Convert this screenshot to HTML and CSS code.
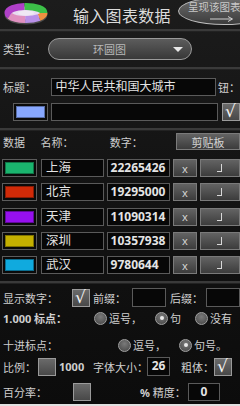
FILE: index.html
```html
<!DOCTYPE html>
<html lang="zh-CN">
<head>
    <meta charset="UTF-8">
    <meta name="viewport" content="width=device-width, initial-scale=1.0">
    <title>输入图表数据</title>
    <link rel="stylesheet" href="styles.css">
</head>
<body>
    <div class="screen">
        <div class="header">
            <svg class="logo" width="48" height="24" viewBox="0 0 48 24">
                <ellipse cx="24" cy="12.5" rx="18" ry="6.5" fill="none" stroke="#4a4a4a" stroke-width="7"/>
                <ellipse cx="24" cy="11" rx="18" ry="6.5" fill="#e8dcf0" stroke="none"/>
                <g fill="none" stroke-width="7">
                    <ellipse cx="24" cy="11" rx="18" ry="6.5" stroke="#ee9040" stroke-dasharray="13 200" stroke-dashoffset="6"/>
                    <ellipse cx="24" cy="11" rx="18" ry="6.5" stroke="#b890e8" stroke-dasharray="14 200" stroke-dashoffset="-7"/>
                    <ellipse cx="24" cy="11" rx="18" ry="6.5" stroke="#e090c0" stroke-dasharray="16 200" stroke-dashoffset="-21"/>
                    <ellipse cx="24" cy="11" rx="18" ry="6.5" stroke="#b040c8" stroke-dasharray="22 200" stroke-dashoffset="-37"/>
                    <ellipse cx="24" cy="11" rx="18" ry="6.5" stroke="#3cc048" stroke-dasharray="22 200" stroke-dashoffset="-59"/>
                    <ellipse cx="24" cy="11" rx="18" ry="6.5" stroke="#e07890" stroke-dasharray="14 200" stroke-dashoffset="-81"/>
                </g>
                <ellipse cx="24" cy="11" rx="8" ry="2.6" fill="#efe8f4"/>
            </svg>
            <div class="title">输入图表数据</div>
            <div class="show-btn">
                <span>呈现该图表</span>
                <svg class="arrow" width="24" height="6" viewBox="0 0 24 6">
                    <path d="M0 3 H22 M18 0.5 L22.5 3 L18 5.5" fill="none" stroke="#d0d0d0" stroke-width="1"/>
                </svg>
            </div>
        </div>
        <div class="rule"></div>

        <div class="row type-row">
            <span class="label w48">类型：</span>
            <div class="dropdown">
                <span>环圆图</span>
                <i class="tri"></i>
            </div>
        </div>
        <div class="rule"></div>

        <div class="row title-row">
            <span class="label w48">标题：</span>
            <div class="field wide">中华人民共和国大城市</div>
            <span class="label cut">钮：</span>
        </div>
        <div class="row color-row">
            <div class="swatch title-swatch"><i style="background:#88a8ff"></i></div>
            <div class="field wide"></div>
            <div class="check on"></div>
        </div>
        <div class="rule"></div>

        <div class="row data-head">
            <span class="label h-data">数据</span>
            <span class="label h-name">名称：</span>
            <span class="label h-num">数字：</span>
            <div class="btn clip">剪贴板</div>
        </div>

        <div class="rows">
            <div class="row data-row">
                <div class="swatch"><i style="background:#1ab46e"></i></div>
                <div class="field name">上海</div>
                <div class="field num">22265426</div>
                <div class="btn del">x</div>
                <div class="btn ret"><i class="ret-mark"></i></div>
            </div>
            <div class="row data-row">
                <div class="swatch"><i style="background:#d02a08"></i></div>
                <div class="field name">北京</div>
                <div class="field num">19295000</div>
                <div class="btn del">x</div>
                <div class="btn ret"><i class="ret-mark"></i></div>
            </div>
            <div class="row data-row">
                <div class="swatch"><i style="background:#9610ee"></i></div>
                <div class="field name">天津</div>
                <div class="field num">11090314</div>
                <div class="btn del">x</div>
                <div class="btn ret"><i class="ret-mark"></i></div>
            </div>
            <div class="row data-row">
                <div class="swatch"><i style="background:#c4b000"></i></div>
                <div class="field name">深圳</div>
                <div class="field num">10357938</div>
                <div class="btn del">x</div>
                <div class="btn ret"><i class="ret-mark"></i></div>
            </div>
            <div class="row data-row">
                <div class="swatch"><i style="background:#10aade"></i></div>
                <div class="field name">武汉</div>
                <div class="field num">9780644</div>
                <div class="btn del">x</div>
                <div class="btn ret"><i class="ret-mark"></i></div>
            </div>
        </div>
        <div class="rule"></div>

        <div class="row opt-row first">
            <span class="label w72">显示数字：</span>
            <div class="check on"></div>
            <span class="label pre">前缀：</span>
            <div class="field small"></div>
            <span class="label post">后缀：</span>
            <div class="field small"></div>
        </div>
        <div class="row radio-row">
            <span class="label bold-num w92">1.000 标点：</span>
            <span class="radio"></span><span class="label r-txt">逗号，</span>
            <span class="radio sel"></span><span class="label r-short">句</span>
            <span class="radio"></span><span class="label">没有</span>
        </div>
        <div class="row radio-row dec">
            <span class="label w116">十进标点：</span>
            <span class="radio"></span><span class="label r-txt">逗号，</span>
            <span class="radio sel"></span><span class="label">句号。</span>
        </div>
        <div class="row opt-row scale">
            <span class="label w36">比例：</span>
            <div class="check"></div>
            <span class="label bold-num k">1000</span>
            <span class="label fs">字体大小：</span>
            <div class="field size">26</div>
            <span class="label bold-lbl">粗体：</span>
            <div class="check on"></div>
        </div>
        <div class="row opt-row pct">
            <span class="label w72">百分率：</span>
            <div class="check"></div>
            <span class="label prec"><b>%</b> 精度：</span>
            <div class="field digits">0</div>
        </div>
        <div class="bottom"></div>
    </div>
</body>
</html>
```

FILE: styles.css
```css
body {
    margin: 0;
    font-family: "Noto Sans", "Noto Sans CJK SC", sans-serif;
    background-color: #000;
}
.screen {
    width: 240px;
    height: 406px;
    overflow: hidden;
    position: relative;
    background: linear-gradient(180deg, #1c1c1c 0%, #141414 40%, #0c0c0c 100%);
    color: #d8d8d8;
    font-size: 11px;
}
.header {
    height: 29px;
    display: flex;
    align-items: center;
    position: relative;
}
.logo {
    margin-left: 2px;
    margin-top: -2px;
}
.title {
    margin-left: 23px;
    font-size: 16px;
    color: #dcdcdc;
    letter-spacing: 0.3px;
}
.show-btn {
    position: absolute;
    left: 178px;
    top: -3px;
    width: 92px;
    height: 28px;
    border: 1px solid #bdbdbd;
    border-radius: 50% / 50%;
    background: linear-gradient(180deg, #6c6c6c, #3c3c3c);
    color: #c8c8c8;
    font-size: 10.5px;
    padding: 3px 0 0 9px;
    box-sizing: border-box;
    line-height: 13px;
    white-space: nowrap;
}
.show-btn .arrow {
    display: block;
    margin: 2px 0 0 22px;
}
.rule {
    height: 2px;
    background: #3a3a3a;
    border-bottom: 1px solid #222;
}
.row {
    display: flex;
    align-items: center;
}
.label {
    color: #cfcfcf;
    white-space: nowrap;
}
.w48 { width: 48px; padding-left: 3px; box-sizing: border-box; }
.w36 { width: 38px; padding-left: 3px; box-sizing: border-box; }
.w72 { width: 73px; padding-left: 3px; box-sizing: border-box; }
.w92 { width: 94px; padding-left: 3px; box-sizing: border-box; }
.w116 { width: 118px; padding-left: 3px; box-sizing: border-box; }
.type-row {
    height: 22px;
    margin: 6px 0 7px;
}
.dropdown {
    width: 144px;
    height: 22px;
    box-sizing: border-box;
    border: 1.5px solid #9a9a9a;
    border-radius: 11px;
    background: linear-gradient(180deg, #5c5c5c, #383838);
    display: flex;
    align-items: center;
    color: #b8b8b8;
    font-size: 11px;
}
.dropdown span {
    flex: 1;
    padding-left: 44px;
}
.tri {
    width: 0;
    height: 0;
    border-left: 5px solid transparent;
    border-right: 5px solid transparent;
    border-top: 5px solid #e8e8e8;
    margin-right: 8px;
}
.field {
    height: 18px;
    box-sizing: border-box;
    border: 1px solid #5a5a5a;
    background: #070707;
    color: #e4e4e4;
    padding-left: 4px;
    line-height: 16px;
    font-size: 12px;
    white-space: nowrap;
    overflow: hidden;
}
.title-row {
    margin-top: 8px;
    height: 18px;
}
.field.wide {
    width: 167px;
    margin-left: 3px;
}
.cut { margin-left: 2px; }
.color-row {
    margin-top: 7px;
    height: 18px;
    margin-bottom: 7px;
}
.swatch {
    width: 35px;
    height: 18px;
    box-sizing: border-box;
    border: 1px solid #5c5c5c;
    background: #0a0a0a;
    padding: 2px;
    flex-shrink: 0;
}
.swatch i {
    display: block;
    height: 100%;
    box-shadow: inset 0 0 0 1px rgba(0, 0, 0, 0.35);
}
.title-swatch {
    margin-left: 13px;
}
.check {
    width: 18px;
    height: 18px;
    box-sizing: border-box;
    border: 1px solid #9a9a9a;
    background: linear-gradient(180deg, #6a6a6a, #484848);
    flex-shrink: 0;
    position: relative;
}
.check.on::after {
    content: "√";
    position: absolute;
    left: 2px;
    top: -3px;
    font-size: 17px;
    color: #f4f4f4;
    font-family: "DejaVu Sans", sans-serif;
}
.color-row .check {
    margin-left: 4px;
}
.btn {
    height: 18px;
    box-sizing: border-box;
    border: 1px solid #7a7a7a;
    background: linear-gradient(180deg, #636363, #3c3c3c);
    color: #d4d4d4;
    display: flex;
    align-items: center;
    justify-content: center;
    flex-shrink: 0;
}
.data-head {
    height: 17px;
    margin-top: 2px;
}
.h-data { width: 41px; padding-left: 3px; box-sizing: border-box; }
.h-name { width: 70px; }
.h-num { width: 67px; }
.clip {
    width: 64px;
    height: 17px;
    font-size: 11px;
}
.rows {
    margin-top: 9px;
    margin-bottom: 7px;
}
.data-row {
    height: 18px;
    margin-bottom: 6.25px;
}
.data-row:last-child {
    margin-bottom: 0;
}
.data-row .swatch {
    margin-left: 2px;
}
.field.name {
    width: 65px;
    margin-left: 4px;
    font-size: 12.5px;
}
.field.num {
    width: 66px;
    margin-left: 3px;
    font-weight: bold;
    font-size: 12px;
    padding-left: 3px;
}
.del {
    width: 24px;
    margin-left: 3px;
    font-size: 11px;
}
.ret {
    width: 40px;
    margin-left: 3px;
    justify-content: flex-start;
    padding-left: 16px;
}
.ret-mark {
    display: block;
    width: 4px;
    height: 7px;
    border-right: 1.5px solid #d8d8d8;
    border-bottom: 1.5px solid #d8d8d8;
}
.opt-row {
    height: 19px;
}
.opt-row.first { margin-top: 4px; }
.pre { margin-left: 3px; width: 40px; }
.field.small {
    width: 34px;
    height: 19px;
}
.post { margin-left: 4px; width: 37px; }
.radio-row {
    height: 14px;
    margin-top: 4px;
}
.radio-row.dec {
    margin-top: 13px;
}
.radio {
    width: 13px;
    height: 13px;
    box-sizing: border-box;
    border-radius: 50%;
    border: 1px solid #a0a0a0;
    background: radial-gradient(circle at 50% 35%, #7a7a7a, #444);
    margin-right: 2px;
    position: relative;
    flex-shrink: 0;
}
.radio.sel::after {
    content: "";
    position: absolute;
    left: 3.5px;
    top: 3.5px;
    width: 4px;
    height: 4px;
    border-radius: 50%;
    background: #e8e8e8;
}
.r-txt { width: 46px; }
.r-short { width: 25px; }
.bold-num { font-weight: bold; }
.scale { margin-top: 5px; }
.k { margin-left: 3px; width: 34px; }
.fs { width: 54px; }
.field.size {
    width: 23px;
    height: 19px;
    font-weight: bold;
    text-align: center;
    padding-left: 0;
}
.bold-lbl { margin-left: 11px; width: 33px; }
.pct { margin-top: 6px; }
.prec { margin-left: 49px; width: 48px; }
.prec b { font-weight: bold; }
.field.digits {
    width: 32px;
    height: 18px;
    font-weight: bold;
    text-align: center;
    padding-left: 0;
}
.bottom {
    position: absolute;
    left: 0;
    right: 0;
    bottom: 0;
    height: 2px;
    background: #e0e0e0;
}
```
